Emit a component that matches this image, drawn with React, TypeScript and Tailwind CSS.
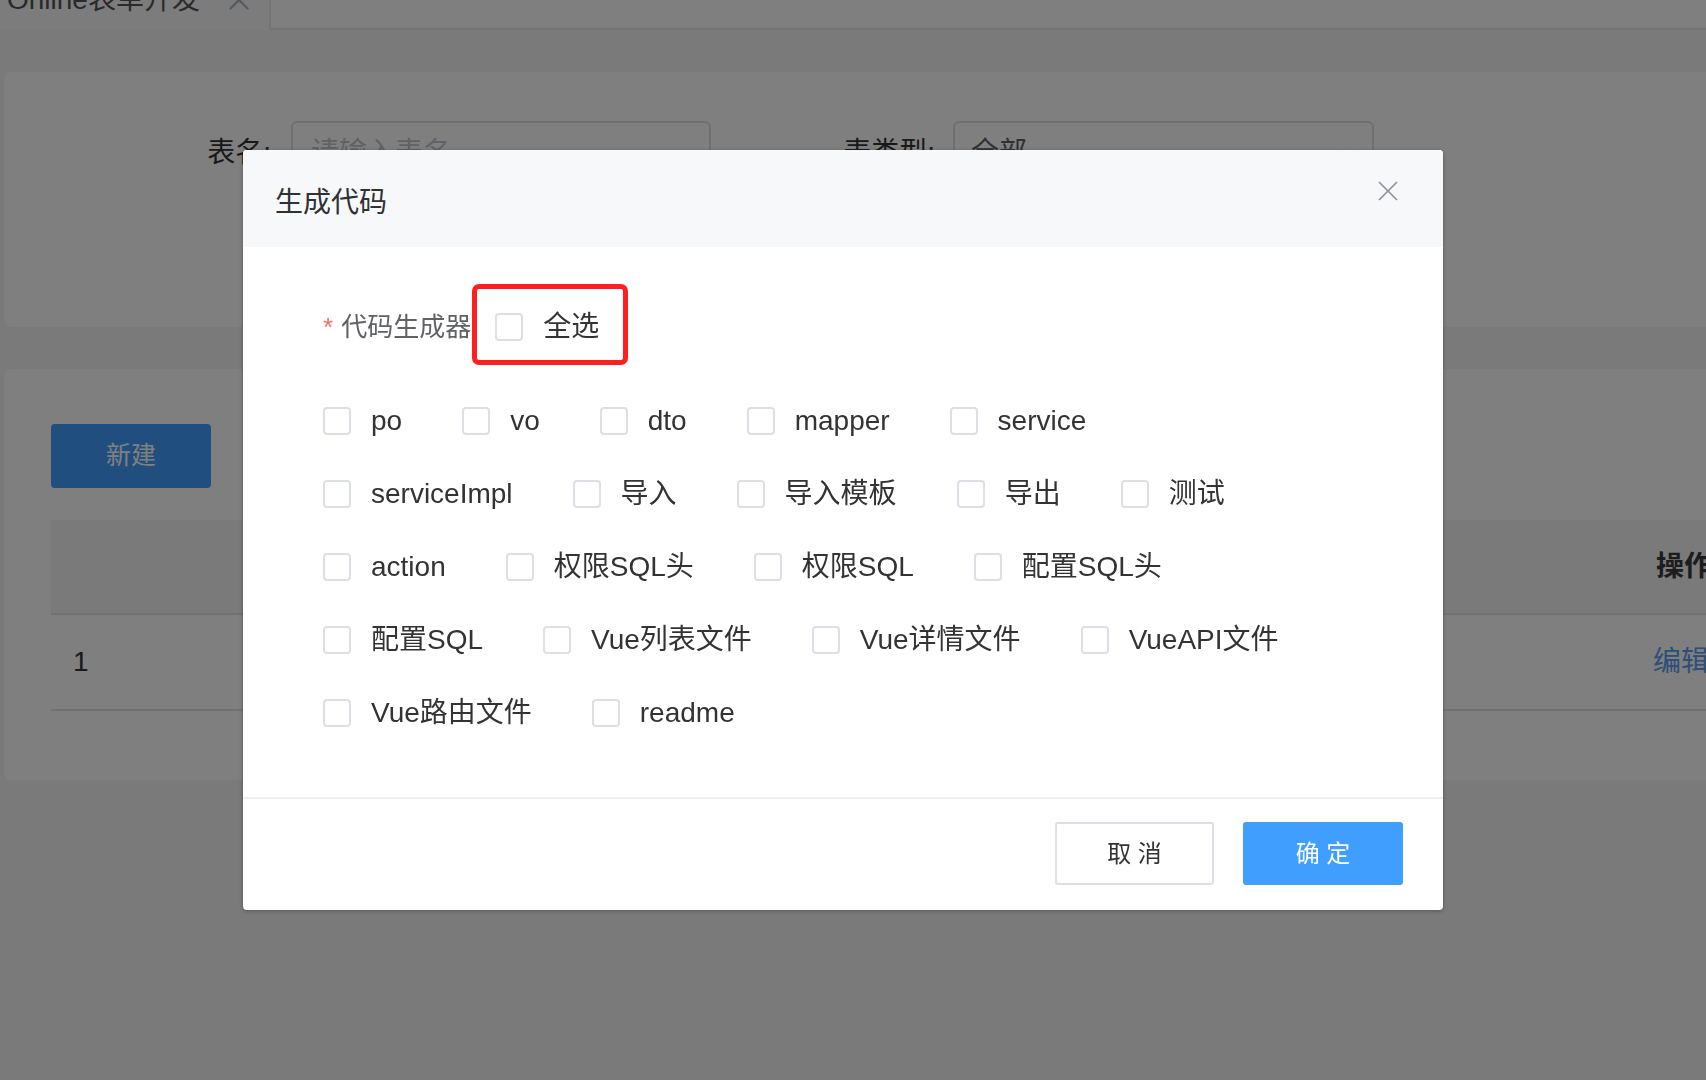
import { X } from "lucide-react";

const rows: string[][] = [
  ["po", "vo", "dto", "mapper", "service"],
  ["serviceImpl", "导入", "导入模板", "导出", "测试"],
  ["action", "权限SQL头", "权限SQL", "配置SQL头"],
  ["配置SQL", "Vue列表文件", "Vue详情文件", "VueAPI文件"],
  ["Vue路由文件", "readme"],
];

function Box() {
  return <span className="inline-block h-[28px] w-[28px] shrink-0 rounded-[4px] border-2 border-[#dcdfe6] bg-white" />;
}

function CheckItem({ label }: { label: string }) {
  return (
    <label className="mr-[60px] flex cursor-pointer items-center gap-[20px]">
      <Box />
      <span className="text-[28px] leading-none text-[#333]">{label}</span>
    </label>
  );
}

function Page() {
  return (
    <div className="h-screen w-full overflow-hidden bg-[#f4f4f5] text-[#333]">
      {/* tabs */}
      <div className="flex h-[30px]">
        <div className="flex w-[269px] shrink-0 overflow-hidden bg-[#f8f8f8]">
          <div className="-mt-[16px] flex h-[32px] items-center pl-[7px] text-[28px] leading-[32px] text-[#555]">
            Online表单开发
            <X className="ml-[22px] h-[34px] w-[34px] shrink-0 text-[#a8b4c6]" strokeWidth={1.6} />
          </div>
        </div>
        <div className="flex-1 border-b-2 border-l-2 border-[#e8e8e8] bg-white" />
      </div>

      {/* search card */}
      <div className="ml-[4px] mt-[42px] h-[255px] w-[1760px] rounded-[8px] bg-white pt-[49px]">
        <div className="flex items-center">
          <div className="w-[287px] pr-[20px] text-right text-[28px]">表名:</div>
          <div className="flex h-[64px] w-[420px] items-center rounded-[6px] border-2 border-[#dcdfe6] pl-[18px] text-[28px] text-[#c0c4cc]">
            请输入表名
          </div>
          <div className="w-[242px] pr-[18px] text-right text-[28px]">表类型:</div>
          <div className="flex h-[64px] w-[421px] items-center justify-between rounded-[6px] border-2 border-[#dcdfe6] pl-[16px] pr-[14px] text-[28px] text-[#606266]">
            全部
            <svg width="22" height="22" viewBox="0 0 24 24" fill="none" stroke="#c0c4cc" strokeWidth="2">
              <path d="M5 9l7 7 7-7" />
            </svg>
          </div>
        </div>
      </div>

      {/* list card */}
      <div className="ml-[4px] mt-[42px] h-[411px] w-[1760px] rounded-[8px] bg-white pl-[47px] pt-[55px]">
        <button className="flex h-[64px] w-[160px] items-center justify-center rounded-[4px] bg-[#409eff] text-[25px] text-white">
          新建
        </button>
        <div className="mt-[32px]">
          <div className="flex h-[95px] items-center border-b-2 border-[#dfe3ea] bg-[#f4f4f4]">
            <div className="w-[1605px] shrink-0" />
            <div className="text-[28px] font-bold text-[#3a3a3a]">操作</div>
          </div>
          <div className="flex h-[96px] items-center border-b-2 border-[#dfe3ea]">
            <div className="w-[1602px] shrink-0 pl-[22px] text-[28px]">1</div>
            <div className="text-[28px] text-[#5a9cf0]">编辑</div>
          </div>
        </div>
      </div>
    </div>
  );
}

export default function App() {
  return (
    <div className="relative font-['Liberation_Sans','Noto_Sans_CJK_SC',sans-serif]">
      <Page />
      <div className="fixed inset-0 bg-black/50" />

      <div className="fixed left-[243px] top-[150px] w-[1200px] overflow-hidden rounded-[4px] bg-white shadow-[0_1px_4px_rgba(0,0,0,0.3)]">
        <div className="flex h-[97px] bg-[#f7f8fa] pl-[32px]">
          <div className="flex-1 self-center pt-[8px] text-[28px] text-[#303133]">生成代码</div>
          <button className="mr-[38px] mt-[24px] self-start text-[#909399]">
            <X className="h-[34px] w-[34px]" strokeWidth={1.2} />
          </button>
        </div>

        <div className="pb-[48px] pl-[80px] pt-[37px]">
          <div className="flex items-center">
            <div className="flex items-center pt-[5px] text-[26px] text-[#606266]">
              <span className="mr-[8px] text-[#f56c6c]">*</span>
              代码生成器
            </div>
            <div className="ml-[1px] flex h-[81px] items-center rounded-[7px] border-[5px] border-[#ff1f1f] pl-[18px] pr-[24px] pt-[4px]">
              <Box />
              <span className="ml-[20px] text-[28px] leading-none text-[#333]">全选</span>
            </div>
          </div>

          <div className="mt-[19px]">
            {rows.map((row, i) => (
              <div key={i} className="flex h-[73px] items-center">
                {row.map((r) => (
                  <CheckItem key={r} label={r} />
                ))}
              </div>
            ))}
          </div>
        </div>

        <div className="flex justify-end gap-[29px] border-t-2 border-[#eeeff2] pb-[25px] pr-[40px] pt-[23px]">
          <button className="flex h-[63px] w-[159px] items-center justify-center rounded-[3px] border-2 border-[#dcdfe6] bg-white text-[24px] text-[#333]">
            取 消
          </button>
          <button className="flex h-[63px] w-[160px] items-center justify-center rounded-[3px] bg-[#409eff] text-[24px] text-white">
            确 定
          </button>
        </div>
      </div>
    </div>
  );
}
